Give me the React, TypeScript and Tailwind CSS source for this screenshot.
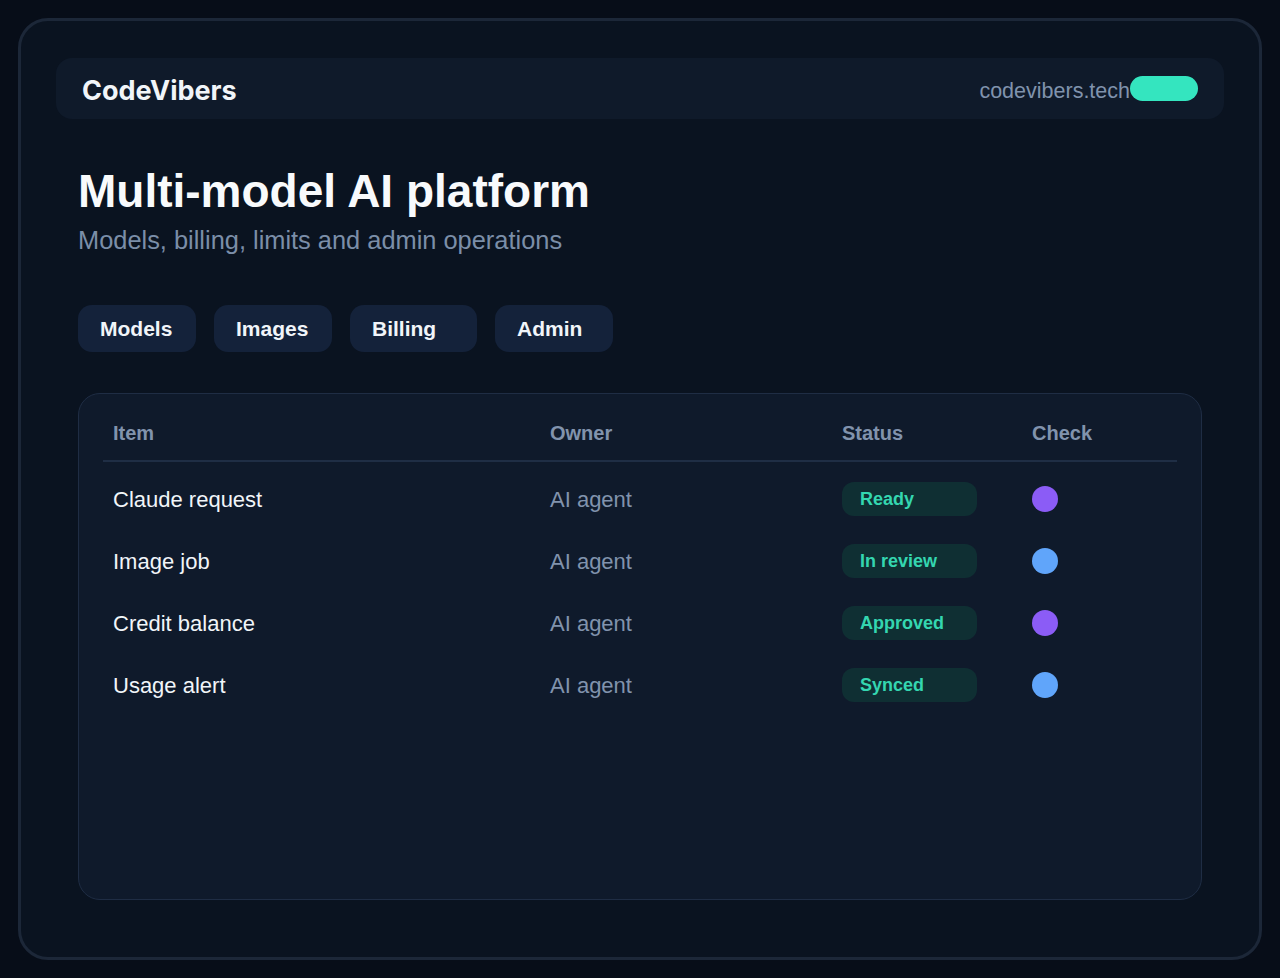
const tabs = [
  { label: "Models", w: "w-[118px]" },
  { label: "Images", w: "w-[118px]" },
  { label: "Billing", w: "w-[127px]" },
  { label: "Admin", w: "w-[118px]" },
];

const rows = [
  { item: "Claude request", owner: "AI agent", status: "Ready", dot: "bg-[#8b5cf6]" },
  { item: "Image job", owner: "AI agent", status: "In review", dot: "bg-[#60a5fa]" },
  { item: "Credit balance", owner: "AI agent", status: "Approved", dot: "bg-[#8b5cf6]" },
  { item: "Usage alert", owner: "AI agent", status: "Synced", dot: "bg-[#60a5fa]" },
];

export default function App() {
  return (
    <main className="min-h-screen bg-[#070d18] p-[18px] font-['Liberation_Sans',Arial,sans-serif]">
      <div className="flex h-[942px] flex-col rounded-[30px] border-[3px] border-[#1c2738] bg-[#0a1320] px-[35px] pt-[37px] pb-[57px]">
        {/* Header */}
        <header className="flex h-[61px] items-center justify-between rounded-2xl bg-[#0f1a2a] px-[26px]">
          <span className="pt-[6px] font-['Inter',sans-serif] text-[27px] font-bold text-[#f1f5f9]">
            CodeVibers
          </span>
          <div className="flex items-center">
            <span className="pt-[6px] text-[21.5px] text-[#8093ad]">codevibers.tech</span>
            <span className="h-[25px] w-[68px] rounded-full bg-[#34e5bf]" />
          </div>
        </header>

        <div className="flex flex-1 flex-col px-[22px]">
          {/* Hero */}
          <h1 className="mt-[45px] text-[46px] leading-[54px] font-bold text-[#f8fafc]">
            Multi-model AI platform
          </h1>
          <p className="mt-[7px] text-[25.4px] leading-[30px] text-[#7b8ea8]">
            Models, billing, limits and admin operations
          </p>

          {/* Tabs */}
          <nav className="mt-[50px] flex gap-[18px]">
            {tabs.map((t) => (
              <button
                key={t.label}
                className={`h-[47px] ${t.w} rounded-[14px] bg-[#14223a] pl-[22px] text-left text-[21px] font-bold text-[#f1f5f9]`}
              >
                {t.label}
              </button>
            ))}
          </nav>

          {/* Table card */}
          <section className="mt-[41px] flex-1 rounded-[22px] border border-[#1f2d44] bg-[#0f1a2b] px-6 pt-6">
            <div className="grid grid-cols-[437px_292px_190px_158px] border-b-2 border-[#1f2e45] pb-[15px] text-[20px] font-bold text-[#8193ad]">
              <div className="px-[10px] pt-[3px] leading-6">Item</div>
              <div className="px-[10px] pt-[3px] leading-6">Owner</div>
              <div className="px-[10px] pt-[3px] leading-6">Status</div>
              <div className="px-[10px] pt-[3px] leading-6">Check</div>
            </div>
            <div className="pt-[6px]">
              {rows.map((r) => (
                <div
                  key={r.item}
                  className="grid h-[62px] grid-cols-[437px_292px_190px_158px] items-center text-[22px]"
                >
                  <div className="px-[10px] text-[#f1f5f9]">{r.item}</div>
                  <div className="px-[10px] text-[#8193ad]">{r.owner}</div>
                  <div className="px-[10px]">
                    <span className="flex h-[34px] w-[135px] items-center rounded-xl bg-[#0f2f33] pl-[18px] text-[18px] font-bold text-[#34d6b0]">
                      {r.status}
                    </span>
                  </div>
                  <div className="px-[10px]">
                    <span className={`block h-[26px] w-[26px] rounded-full ${r.dot}`} />
                  </div>
                </div>
              ))}
            </div>
          </section>
        </div>
      </div>
    </main>
  );
}
